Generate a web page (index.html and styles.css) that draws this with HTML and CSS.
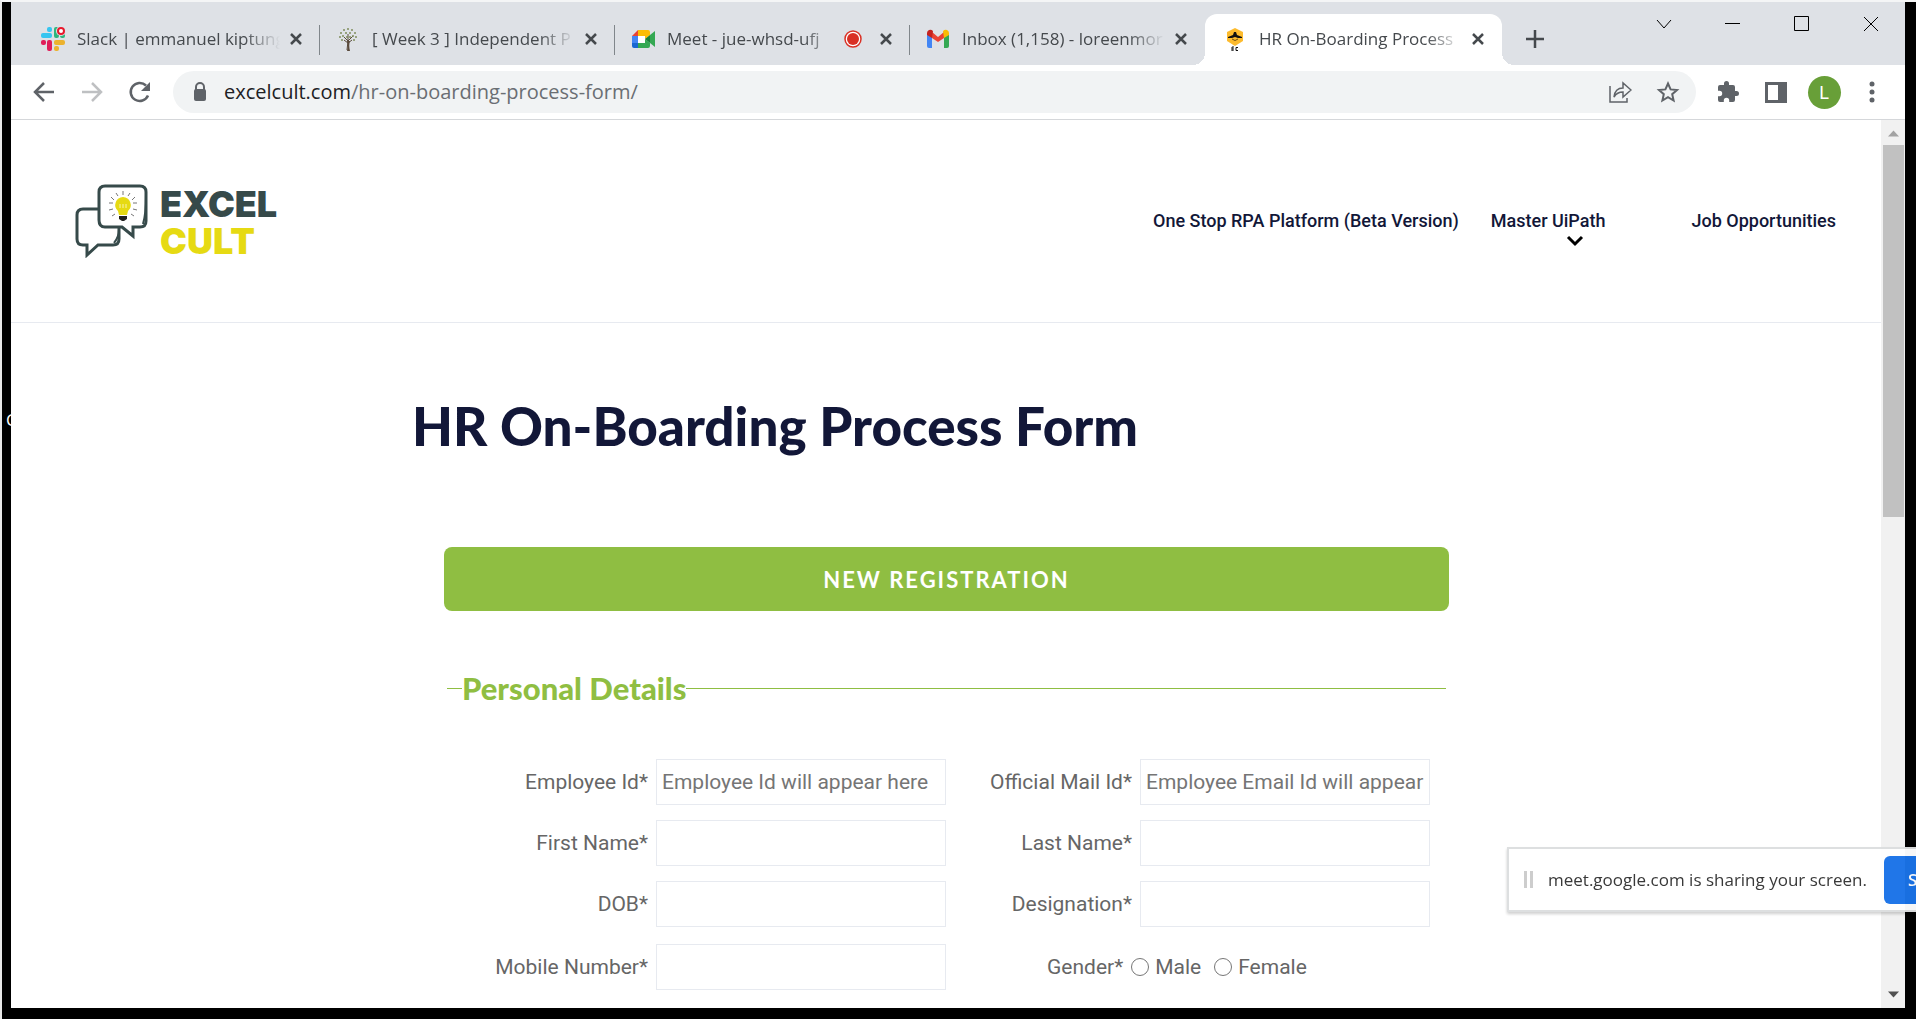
FILE: index.html
```html
<!DOCTYPE html>
<html lang="en">
<head>
<meta charset="utf-8">
<title>HR On-Boarding Process Form</title>
<link rel="stylesheet" href="styles.css">
</head>
<body>
<div class="desktop">
  <span class="desktop-label">C</span>
  <div class="browser">
    <div class="tabstrip">
      <div class="tab">
        <svg class="favicon" viewBox="0 0 24 24" aria-hidden="true">
          <g fill="#36c5f0"><rect x="0" y="6" width="11" height="5" rx="2"/><rect x="6" y="0" width="5" height="5" rx="2"/></g>
          <g fill="#2eb67d"><rect x="13" y="0" width="5" height="11" rx="2"/><rect x="19" y="6" width="5" height="5" rx="2"/></g>
          <g fill="#ecb22e"><rect x="13" y="13" width="11" height="5" rx="2"/><rect x="13" y="19" width="5" height="5" rx="2"/></g>
          <g fill="#e01e5a"><rect x="6" y="13" width="5" height="11" rx="2"/><rect x="0" y="13" width="5" height="5" rx="2"/></g>
          <circle cx="20" cy="4" r="5" fill="#dee1e6"/><circle cx="20" cy="4" r="3" fill="#fff" stroke="#e8192c" stroke-width="2"/>
        </svg>
        <span class="tab-title">Slack | emmanuel kiptung</span>
        <button class="tab-close" aria-label="Close tab"><svg viewBox="0 0 24 24"><path d="M7 7l10 10M17 7L7 17"/></svg></button>
      </div>
      <div class="tab">
        <svg class="favicon" viewBox="0 0 24 24" aria-hidden="true">
          <path d="M11 23l1-9-4-4M12 14l5-5M12 14V7M8 13l4 3 4-3" fill="none" stroke="#5a4a3c" stroke-width="1"/>
          <path d="M11 24c1-4 1-7 0-10h3c-1 3-1 6 0 10z" fill="#5a4a3c"/>
          <g fill="#7f8c5c"><circle cx="12" cy="2" r="1"/><circle cx="8" cy="3" r="1"/><circle cx="16" cy="3" r="1"/><circle cx="5" cy="6" r="1"/><circle cx="10" cy="6" r="1"/><circle cx="14" cy="6" r="1"/><circle cx="19" cy="6" r="1"/><circle cx="7" cy="9" r="1"/><circle cx="17" cy="9" r="1"/><circle cx="4" cy="10" r="1"/><circle cx="20" cy="10" r="1"/><circle cx="11" cy="10" r="1"/><circle cx="14" cy="10" r="1"/><circle cx="6" cy="13" r="1"/><circle cx="18" cy="13" r="1"/></g>
        </svg>
        <span class="tab-title">[ Week 3 ] Independent P</span>
        <button class="tab-close" aria-label="Close tab"><svg viewBox="0 0 24 24"><path d="M7 7l10 10M17 7L7 17"/></svg></button>
      </div>
      <div class="tab">
        <svg class="favicon" viewBox="0 0 24 24" aria-hidden="true">
          <path d="M7 3v6H1z" fill="#ea4335"/><path d="M1 9h6v7H1z" fill="#4285f4"/><path d="M1 16h6v5H3q-2 0-2-2z" fill="#1967d2"/>
          <path d="M7 16h7v-4l5 4v3q0 2-2 2H7z" fill="#34a853"/><path d="M7 3h10q2 0 2 2v3l-5 4V9H7z" fill="#fbbc04"/>
          <path d="M14 12l5-4v8z" fill="#188038"/><path d="M19 8l5-4v16l-5-4z" fill="#34a853"/><path d="M7 9h7v7H7z" fill="#fff"/>
        </svg>
        <span class="tab-title">Meet - jue-whsd-ufj</span>
        <svg class="recording" viewBox="0 0 20 20" role="img" aria-label="Recording"><circle cx="10" cy="10" r="8" fill="#fff" stroke="#d93025" stroke-width="1.5"/><circle cx="10" cy="10" r="6" fill="#d93025"/></svg>
        <button class="tab-close" aria-label="Close tab"><svg viewBox="0 0 24 24"><path d="M7 7l10 10M17 7L7 17"/></svg></button>
      </div>
      <div class="tab tab-last">
        <svg class="favicon" viewBox="0 0 24 24" aria-hidden="true">
          <path d="M1 6v13q0 2 2 2h3V10z" fill="#4285f4"/><path d="M18 10v11h3q2 0 2-2V6z" fill="#34a853"/>
          <path d="M6 5v6l6 4 6-4V5l-6 5z" fill="#ea4335"/><path d="M1 8V6q0-2 2-3t4 1l-1 7z" fill="#c5221f"/><path d="M23 8V6q0-2-2-3t-4 1l1 7z" fill="#fbbc04"/>
        </svg>
        <span class="tab-title">Inbox (1,158) - loreenmor</span>
        <button class="tab-close" aria-label="Close tab"><svg viewBox="0 0 24 24"><path d="M7 7l10 10M17 7L7 17"/></svg></button>
      </div>
      <div class="tab tab-active">
        <svg class="favicon" viewBox="0 0 24 24" aria-hidden="true">
          <path d="M12 1l8 4v9l-8 5-8-5V5z" fill="#fdbb2d"/><path d="M5 10l5-2 1-3h2l1 3 5 2v1h-4l-3-1-3 1H5z" fill="#111"/><path d="M9 12q3 3 6 0" fill="none" stroke="#6b4c12"/>
          <path d="M9 20v4M9 22h2M11 20H9M11 24H9M15 20.500h-2v3h2" fill="none" stroke="#111" stroke-width="1"/>
        </svg>
        <span class="tab-title">HR On-Boarding Process</span>
        <button class="tab-close" aria-label="Close tab"><svg viewBox="0 0 24 24"><path d="M7 7l10 10M17 7L7 17"/></svg></button>
      </div>
      <button class="new-tab" aria-label="New tab"><svg viewBox="0 0 24 24"><path d="M12 3v18M3 12h18"/></svg></button>
      <div class="window-controls">
        <button aria-label="Search tabs"><svg viewBox="0 0 16 16"><path d="M1 4l7 8 7-8"/></svg></button>
        <button aria-label="Minimize"><svg viewBox="0 0 16 16"><path d="M0 7.500h15"/></svg></button>
        <button aria-label="Maximize"><svg viewBox="0 0 16 16"><path d="M.5.5h14v14H.5z"/></svg></button>
        <button aria-label="Close"><svg viewBox="0 0 16 16"><path d="M1 1l14 14M15 1L1 15"/></svg></button>
      </div>
    </div>

    <div class="toolbar">
      <button class="tool" aria-label="Back"><svg viewBox="0 0 24 24"><path class="line" d="M22 12H4M12 3l-9 9 9 9"/></svg></button>
      <button class="tool" aria-label="Forward" disabled><svg viewBox="0 0 24 24"><path class="line" d="M2 12h18M12 3l9 9-9 9"/></svg></button>
      <button class="tool" aria-label="Reload"><svg viewBox="0 0 24 24"><path class="line" d="M20 15.500A9 9 0 1 1 18 5.500"/><path d="M22 2v9h-9z"/></svg></button>
      <div class="omnibox">
        <svg class="lock" viewBox="0 0 16 20" aria-hidden="true"><path d="M4 8V5a4 4 0 0 1 8 0v3" fill="none" stroke="#5f6368" stroke-width="2"/><rect x="2" y="7" width="12" height="12" rx="2"/></svg>
        <span class="url"><span class="url-host">excelcult.com</span>/hr-on-boarding-process-form/</span>
        <button class="tool" aria-label="Share"><svg viewBox="0 0 24 24"><path class="thin" d="M2 6v16h17v-4M6 17q1-9 9-9V3l8 7-8 7v-5q-6 0-9 5z"/></svg></button>
        <button class="tool" aria-label="Bookmark"><svg viewBox="0 0 24 24"><path class="mid" d="M12 3.500l2.600 5.900 6.400.6-4.800 4.200 1.400 6.300-5.600-3.300-5.600 3.300 1.400-6.300L3 10l6.400-.6z"/></svg></button>
      </div>
      <button class="tool" aria-label="Extensions"><svg viewBox="0 0 24 24"><path d="M20.500 11H19V7a2 2 0 0 0-2-2h-4V3.500a2.500 2.500 0 0 0-5 0V5H4a2 2 0 0 0-2 2v3.800h1.500a2.700 2.700 0 0 1 0 5.400H2V20a2 2 0 0 0 2 2h3.800v-1.500a2.700 2.700 0 0 1 5.400 0V22H17a2 2 0 0 0 2-2v-4h1.500a2.500 2.500 0 0 0 0-5z"/></svg></button>
      <button class="tool" aria-label="Side panel"><svg viewBox="0 0 24 24"><path d="M1 2h22v21H1zM4 5v15h10V5z" fill-rule="evenodd"/></svg></button>
      <button class="tool" aria-label="Profile"><span class="avatar">L</span></button>
      <button class="tool" aria-label="Menu"><svg viewBox="0 0 24 24"><circle cx="12" cy="4" r="2.500"/><circle cx="12" cy="12" r="2.500"/><circle cx="12" cy="20" r="2.500"/></svg></button>
    </div>

    <div class="viewport">
      <div class="page">
        <header class="site-header">
          <a class="brand" href="#">
            <svg class="brand-mark" viewBox="0 0 74 74" aria-hidden="true">
              <g fill="none" stroke="#364a4a" stroke-width="3">
                <path d="M24 25H8q-6 0-6 6v24q0 6 6 6h4v10l11-10h15q6 0 6-6V43"/>
                <path d="M58 52V43h7q6 0 6-6V8q0-6-6-6H30q-6 0-6 6v28q0 7 6 7h17z"/>
                <path d="M71 12q0 18-3 28M44 45q0 8-5 14" stroke-width="2"/>
              </g>
              <path d="M48 13a8 8 0 0 1 5 14l-1 4h-8l-1-4a8 8 0 0 1 5-14z" fill="#e6da13"/>
              <path d="M45 20v4M48 20v4M51 20v4" stroke="#f7f3b0"/>
              <path d="M44 32h8v3l-3 2h-2l-3-2z" fill="#222"/>
              <path d="M48 7v4M41 9l2 3M55 9l-2 3M36 13l3 3M60 13l-3 3M34 19h4M62 19h-4M34 26l4-1M62 26l-4-1M37 32l3-2M59 32l-3-2" stroke="#777"/>
            </svg>
            <span class="brand-name"><span>EXCEL</span><span class="brand-accent">CULT</span></span>
          </a>
          <nav class="site-nav">
            <a href="#">One Stop RPA Platform (Beta Version)</a>
            <a class="has-menu" href="#">Master UiPath<svg class="caret" viewBox="0 0 18 12" aria-hidden="true"><path d="M2 2l7 7 7-7"/></svg></a>
            <a href="#">Job Opportunities</a>
          </nav>
        </header>

        <main class="content">
          <h1>HR On-Boarding Process Form</h1>
          <form class="registration">
            <button class="primary" type="button">NEW REGISTRATION</button>
            <fieldset class="details">
              <legend>Personal Details</legend>
              <div class="fields">
                <div class="field"><label for="empid">Employee Id*</label><input id="empid" type="text" placeholder="Employee Id will appear here"></div>
                <div class="field"><label for="mail">Official Mail Id*</label><input id="mail" type="text" placeholder="Employee Email Id will appear"></div>
                <div class="field"><label for="first">First Name*</label><input id="first" type="text"></div>
                <div class="field"><label for="last">Last Name*</label><input id="last" type="text"></div>
                <div class="field"><label for="dob">DOB*</label><input id="dob" type="text"></div>
                <div class="field"><label for="desig">Designation*</label><input id="desig" type="text"></div>
                <div class="field"><label for="mobile">Mobile Number*</label><input id="mobile" type="text"></div>
                <div class="field field-choice" role="radiogroup" aria-labelledby="gender">
                  <span id="gender">Gender*</span>
                  <label><input type="radio" name="gender">Male</label>
                  <label><input type="radio" name="gender">Female</label>
                </div>
              </div>
            </fieldset>
          </form>
        </main>
      </div>
      <div class="scrollbar">
        <svg class="arrow arrow-up" viewBox="0 0 24 24" aria-hidden="true"><path d="M7 16h11l-5.500-6z"/></svg>
        <div class="track"><div class="thumb"></div></div>
        <svg class="arrow" viewBox="0 0 24 24" aria-hidden="true"><path d="M7 8h11l-5.500 6z"/></svg>
      </div>
    </div>
  </div>

  <div class="share-bar">
    <span class="grip"></span>
    <span class="share-text">meet.google.com is sharing your screen.</span>
    <button class="stop">S</button>
  </div>
</div>
</body>
</html>
```
FILE: styles.css
```css
* { box-sizing: border-box; }

body {
  margin: 0;
  background: #000;
  font-family: Roboto, sans-serif;
}

button {
  border: 0;
  padding: 0;
  background: none;
  font: inherit;
  display: flex;
  align-items: center;
  justify-content: center;
}

.desktop {
  position: relative;
  height: 100vh;
  border-top: 2px solid #f4f5f6;
  border-left: 2px solid #e8e8e8;
  padding: 0 11px 11px 9px;
  overflow: hidden;
}

.desktop-label {
  position: absolute;
  left: 4px;
  top: 408px;
  color: #fff;
  font: 17px/20px "Open Sans", sans-serif;
}

.browser {
  position: relative;
  display: flex;
  flex-direction: column;
  height: 100%;
  background: #fff;
}

/* Tab strip */
.tabstrip {
  display: flex;
  align-items: flex-end;
  height: 63px;
  padding-left: 14px;
  background: #dee1e6;
}

.tab {
  position: relative;
  display: flex;
  align-items: center;
  flex: 0 1 295px;
  min-width: 0;
  height: 51px;
  padding: 0 12px 2px 16px;
  color: #45494d;
  font: 17px/24px "Open Sans", sans-serif;
}

.tab:not(.tab-last):not(.tab-active)::after {
  content: "";
  position: absolute;
  right: 0;
  top: 11px;
  width: 1px;
  height: 30px;
  background: #80868b;
}

.tab-active {
  flex-basis: 297px;
  padding: 0 12px 2px 18px;
  background: #fff;
  border-radius: 12px 12px 0 0;
}

.tab-active::before,
.tab-active::after {
  content: "";
  position: absolute;
  bottom: 0;
  width: 12px;
  height: 12px;
}

.tab-active::before {
  right: 100%;
  background: radial-gradient(circle at 0 0, #dee1e6 12px, #fff 12px);
}

.tab-active::after {
  left: 100%;
  background: radial-gradient(circle at 100% 0, #dee1e6 12px, #fff 12px);
}

.favicon {
  flex: none;
  width: 24px;
  height: 24px;
}

.tab-title {
  flex: 1;
  min-width: 0;
  margin: 0 4px 0 12px;
  overflow: hidden;
  white-space: nowrap;
  mask-image: linear-gradient(to left, transparent, #000 36px);
}

.recording {
  flex: none;
  width: 20px;
  height: 20px;
  margin-right: 11px;
}

.tab-close {
  flex: none;
  width: 24px;
  height: 24px;
}

.tab-close svg,
.new-tab svg {
  width: 24px;
  height: 24px;
  fill: none;
  stroke: #45494d;
  stroke-width: 2.5;
}

.new-tab {
  width: 42px;
  height: 51px;
  padding-bottom: 2px;
  margin-left: 12px;
}

.window-controls {
  display: flex;
  align-self: flex-start;
  margin-left: auto;
}

.window-controls button {
  width: 69px;
  height: 43px;
}

.window-controls svg {
  width: 16px;
  height: 16px;
  fill: none;
  stroke: #000;
}

/* Toolbar */
.toolbar {
  display: flex;
  align-items: center;
  height: 55px;
  padding: 0 9px;
  border-bottom: 1px solid #d5d7da;
}

.tool {
  flex: none;
  width: 48px;
  height: 42px;
}

.tool svg {
  width: 24px;
  height: 24px;
  fill: #5f6368;
}

.tool:disabled { opacity: .4; }

.tool .line,
.tool .mid,
.tool .thin {
  fill: none;
  stroke: #5f6368;
  stroke-width: 2.5;
}

.tool .mid { stroke-width: 2; }
.tool .thin { stroke-width: 1.5; }

.omnibox {
  display: flex;
  align-items: center;
  flex: 1;
  height: 42px;
  margin: 0 8px 0 9px;
  padding: 0 4px 0 19px;
  border-radius: 21px;
  background: #f1f3f4;
}

.lock {
  flex: none;
  width: 16px;
  height: 20px;
  margin-right: 16px;
  fill: #5f6368;
}

.url {
  flex: 1;
  color: #6a6e73;
  font: 20px/28px "Open Sans", sans-serif;
  white-space: nowrap;
}

.url-host { color: #202124; }

.avatar {
  width: 33px;
  height: 33px;
  border-radius: 50%;
  background: #689f38;
  color: #fff;
  font-size: 18px;
  line-height: 33px;
  text-align: center;
}

/* Page */
.viewport {
  display: flex;
  flex: 1;
  min-height: 0;
}

.page {
  flex: 1;
  min-width: 0;
  overflow: hidden;
}

.site-header {
  display: flex;
  align-items: center;
  justify-content: space-between;
  height: 203px;
  padding: 0 45px 0 64px;
  border-bottom: 1px solid #e7eaf0;
}

.brand {
  display: flex;
  align-items: center;
  gap: 11px;
  text-decoration: none;
}

.brand-mark {
  width: 74px;
  height: 74px;
}

.brand-name {
  display: grid;
  padding-top: 4px;
  color: #364a4a;
  font: 900 36px/37px Inter, sans-serif;
}

.brand-accent { color: #e6da13; }

.site-nav {
  display: flex;
  gap: 32px;
}

.site-nav a {
  position: relative;
  color: #121738;
  font-size: 18px;
  font-weight: 500;
  line-height: 24px;
  text-decoration: none;
}

.has-menu { margin-right: 54px; }

.caret {
  position: absolute;
  right: 21px;
  top: 26px;
  width: 18px;
  height: 12px;
  fill: none;
  stroke: #000;
  stroke-width: 3;
}

.content {
  max-width: 1068px;
  margin: 0 auto;
  padding-top: 71px;
}

h1 {
  margin: 0;
  color: #121738;
  font: 900 53px/64px Lato, sans-serif;
}

.registration {
  margin: 89px 31px 0 32px;
}

.primary {
  width: 100%;
  height: 64px;
  padding-top: 2px;
  border-radius: 8px;
  background: #8fbe42;
  color: #fff;
  font: 700 22px/24px Lato, sans-serif;
  letter-spacing: 2px;
}

.details {
  margin: 57px 3px 0;
  padding: 0 16px 0 15px;
  border: 0;
  border-top: 1px solid #8fbe42;
}

.details legend {
  padding: 0;
  color: #8fbe42;
  font: 900 31px/41px Lato, sans-serif;
}

.fields {
  display: grid;
  grid-template-columns: 1fr 1fr;
  row-gap: 15px;
  margin-top: 50px;
  color: #666;
  font-size: 21px;
  line-height: 28px;
}

.field {
  display: flex;
  align-items: center;
  justify-content: flex-end;
  gap: 8px;
}

.field input[type="text"] {
  width: 290px;
  height: 46px;
  padding: 0 5px;
  border: 1px solid #e7eaf0;
  background: #fff;
  color: #666;
  font: 21px/28px Roboto, sans-serif;
}

.field ::placeholder { color: #757575; }

.field-choice {
  justify-content: flex-start;
  min-height: 50px;
  padding-left: 101px;
}

.field-choice label {
  display: flex;
  align-items: center;
  gap: 6px;
  margin-right: 5px;
}

.field-choice input {
  width: 18px;
  height: 18px;
  margin: 0;
}

/* Scrollbar */
.scrollbar {
  display: flex;
  flex-direction: column;
  flex: none;
  width: 24px;
  background: #f1f1f1;
}

.arrow {
  flex: none;
  width: 24px;
  height: 25px;
  fill: #505050;
}

.arrow-up { fill: #a3a3a3; }

.track {
  display: grid;
  grid-template-rows: 4fr 5fr;
  flex: 1;
  padding: 0 1px 0 2px;
}

.thumb { background: #c1c1c1; }

/* Screen sharing notice */
.share-bar {
  position: absolute;
  left: calc(100% - 409px);
  bottom: 107px;
  display: flex;
  align-items: center;
  width: 560px;
  height: 65px;
  padding-left: 15px;
  border: 2px solid #dcdedf;
  background: #fff;
  box-shadow: 0 2px 3px rgba(0, 0, 0, .2);
  opacity: .97;
}

.grip {
  width: 9px;
  height: 17px;
  border: solid #ccc;
  border-width: 0 3px;
}

.share-text {
  flex: none;
  width: 336px;
  margin-left: 15px;
  color: #333;
  font: 17px/24px "Open Sans", sans-serif;
  white-space: nowrap;
}

.stop {
  justify-content: flex-start;
  width: 160px;
  height: 48px;
  padding-left: 24px;
  border-radius: 6px;
  background: #1a73e8;
  color: #fff;
  font: 600 17px/24px "Open Sans", sans-serif;
}
```
